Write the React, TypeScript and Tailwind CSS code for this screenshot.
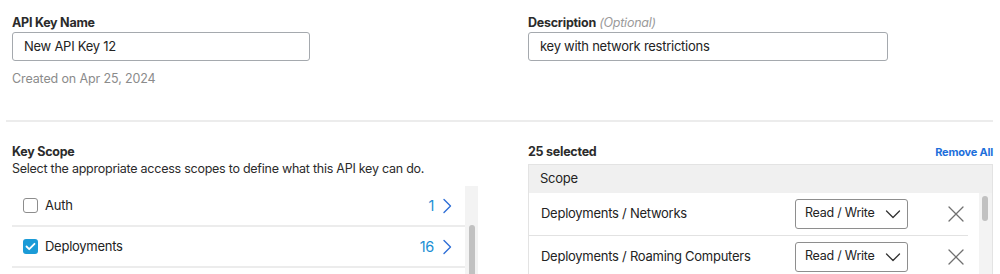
import React from "react";

const font = { fontFamily: "Inter, 'Noto Sans', sans-serif" };

function Chevron() {
  return (
    <svg width="10" height="16" viewBox="0 0 10 16" fill="none">
      <path d="M2 1.5 L8.5 8 L2 14.5" stroke="#2f6fd6" strokeWidth="1.4" strokeLinecap="round" strokeLinejoin="round" />
    </svg>
  );
}

function DownChevron() {
  return (
    <svg width="16" height="10" viewBox="0 0 16 10" fill="none">
      <path d="M1.5 2 L8 8.5 L14.5 2" stroke="#333" strokeWidth="1.3" strokeLinecap="round" strokeLinejoin="round" />
    </svg>
  );
}

function XIcon() {
  return (
    <svg width="16" height="16" viewBox="0 0 16 16" fill="none">
      <path d="M1 1 L15 15 M15 1 L1 15" stroke="#707070" strokeWidth="1.3" strokeLinecap="round" />
    </svg>
  );
}

function ListRow({ label, count, checked }: { label: string; count: string; checked: boolean }) {
  return (
    <div className="flex h-[41px] items-center border-b-2 border-[#ececec] pl-[11px] pr-[13px]">
      {checked ? (
        <div className="flex h-[15px] w-[15px] items-center justify-center rounded-[3px] bg-[#1b9bd7]">
          <svg width="11" height="9" viewBox="0 0 11 9" fill="none">
            <path d="M1.5 4.5 L4.2 7.2 L9.5 1.8" stroke="white" strokeWidth="1.8" strokeLinecap="round" strokeLinejoin="round" />
          </svg>
        </div>
      ) : (
        <div className="h-[15px] w-[15px] rounded-[3px] border-[1.5px] border-[#8d8d8d] bg-white" />
      )}
      <span className="ml-[7px] text-[13px] tracking-[-0.02em] text-[#232323]">{label}</span>
      <span className="ml-auto text-[14.5px] tracking-[-0.02em] text-[#1b8fd4]">{count}</span>
      <span className="ml-[8px] flex items-center"><Chevron /></span>
    </div>
  );
}

function TableRow({ label }: { label: string }) {
  return (
    <div className="mr-[11px] flex h-[43px] items-center border-b border-[#e2e2e2] pl-[12px]">
      <span className="whitespace-nowrap text-[13px] tracking-[-0.02em] text-[#232323]">{label}</span>
      <div className="ml-auto flex h-[30px] w-[113px] items-center justify-between rounded-[3px] border border-[#8e8e8e] pl-[9px] pr-[6px]">
        <span className="whitespace-nowrap text-[12.5px] tracking-[-0.02em] text-[#232323]">Read / Write</span>
        <DownChevron />
      </div>
      <div className="ml-[40px] mr-[4px] flex w-[16px] items-center justify-center">
        <XIcon />
      </div>
    </div>
  );
}

export default function App() {
  return (
    <div className="h-[274px] w-[1000px] overflow-hidden bg-white" style={font}>
      <div className="grid grid-cols-[500px_465px] gap-x-[16px] pl-[12px] pt-[15px]">
        <div>
          <div className="text-[12.5px] font-bold leading-[16px] tracking-[-0.02em] text-[#2b2b2b]">API Key Name</div>
          <div className="mt-[1px] flex h-[29px] w-[298px] items-center rounded-[3px] border border-[#a5a9ae] px-[11px] text-[13px] tracking-[-0.02em] text-[#232323]">
            New API Key 12
          </div>
          <div className="mt-[9px] text-[12.5px] leading-[18px] tracking-[-0.01em] text-[#8b8b8b]">Created on Apr 25, 2024</div>
        </div>
        <div>
          <div className="text-[12.5px] leading-[16px] tracking-[-0.02em] text-[#2b2b2b]">
            <span className="font-bold">Description</span>{" "}
            <span className="italic text-[#9a9a9a]">(Optional)</span>
          </div>
          <div className="mt-[1px] flex h-[29px] w-[360px] items-center rounded-[3px] border border-[#a5a9ae] px-[11px] text-[13px] tracking-[-0.02em] text-[#232323]">
            key with network restrictions
          </div>
        </div>
      </div>

      <div className="mx-[6px] mt-[32px] h-[2px] w-[987px] bg-[#ececec]" />

      <div className="grid grid-cols-[500px_465px] gap-x-[16px] pl-[12px] pt-[22px]">
        <div>
          <div className="text-[12.5px] font-bold leading-[16px] tracking-[-0.02em] text-[#2b2b2b]">Key Scope</div>
          <div className="text-[12.5px] leading-[17px] tracking-[-0.02em] text-[#2b2b2b]">
            Select the appropriate access scopes to define what this API key can do.
          </div>
          <div className="mt-[9px] flex w-[466px]">
            <div className="flex-1">
              <ListRow label="Auth" count="1" checked={false} />
              <ListRow label="Deployments" count="16" checked={true} />
            </div>
            <div className="relative h-[100px] w-[13px] bg-[#f3f3f3]">
              <div className="absolute left-[4px] top-[39px] h-[60px] w-[6px] rounded-full bg-[#c1c1c1]" />
            </div>
          </div>
        </div>
        <div>
          <div className="flex items-baseline justify-between">
            <span className="text-[12.5px] font-bold leading-[16px] tracking-[-0.02em] text-[#2b2b2b]">25 selected</span>
            <span className="text-[11px] font-bold tracking-[-0.02em] text-[#1d6fdb]">Remove All</span>
          </div>
          <div className="mt-[3px] border border-[#e3e3e3]">
            <div className="flex h-[28px] items-center bg-[#f0f0f0] pl-[11px] text-[13px] tracking-[-0.02em] text-[#232323]">Scope</div>
            <div className="flex">
              <div className="flex-1">
                <TableRow label="Deployments / Networks" />
                <TableRow label="Deployments / Roaming Computers" />
              </div>
              <div className="relative w-[13px] bg-[#f3f3f3]">
                <div className="absolute left-[3px] top-[3px] h-[25px] w-[6px] rounded-full bg-[#c1c1c1]" />
              </div>
            </div>
          </div>
        </div>
      </div>
    </div>
  );
}
